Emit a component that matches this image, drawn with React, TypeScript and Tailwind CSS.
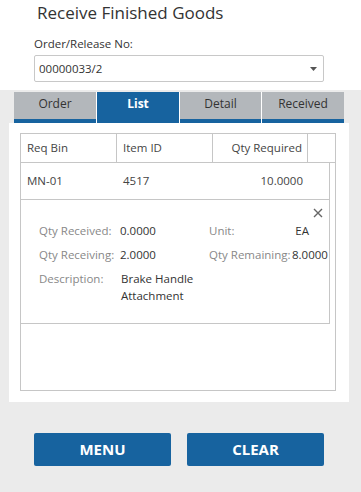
const font = { fontFamily: '"Open Sans", "Noto Sans", Arial, sans-serif' };

function Tab({ label, active }: { label: string; active?: boolean }) {
  return (
    <div
      className={`flex h-[31px] items-center justify-center border-b-4 border-[#17639f] text-[12px] ${
        active ? "bg-[#17639f] font-bold text-white" : "bg-[#b3b7bb] text-[#333]"
      }`}
    >
      <span className="-mt-[3px]">{label}</span>
    </div>
  );
}

function Field({ label, value, labelW }: { label: string; value: string; labelW: string }) {
  return (
    <div className="flex whitespace-nowrap text-[11.5px] leading-[17px]">
      <span className={`${labelW} shrink-0 text-[#888]`}>{label}</span>
      <span className="text-[#333]">{value}</span>
    </div>
  );
}

export default function App() {
  return (
    <div className="flex h-[492px] w-[361px] flex-col bg-[#ebebeb]" style={font}>
      <div className="h-[90px] bg-white">
        <div className="pl-[37px] pt-[1px] text-[17px] leading-[24px] text-[#333]">Receive Finished Goods</div>
        <div className="pl-[34px] pt-[11px] text-[11.5px] leading-[16px] text-[#333]">Order/Release No:</div>
        <div className="ml-[34px] mt-[3px] flex h-[27px] w-[290px] items-center justify-between rounded-[2px] border border-[#c8c8c8] pl-[4px] pr-[6px] text-[11.5px] text-[#333]">
          <span>00000033/2</span>
          <svg width="7" height="4" viewBox="0 0 7 4">
            <path d="M0 0h7L3.5 4z" fill="#555" />
          </svg>
        </div>
      </div>

      <div className="ml-[14px] mt-[2px] grid w-[330px] grid-cols-[82px_82px_81px_82px] gap-x-px bg-white">
        <Tab label="Order" />
        <Tab label="List" active />
        <Tab label="Detail" />
        <Tab label="Received" />
      </div>

      <div className="ml-[9px] h-[279px] w-[340px] bg-white pl-[11px] pt-[10px]">
        <div className="flex h-[258px] w-[316px] flex-col border border-[#c6c6c6] text-[11.5px] text-[#444]">
          <div className="flex h-[29px] border-b border-[#c6c6c6]">
            <div className="flex w-[96px] items-center border-r border-[#c6c6c6] pl-[6px]">Req Bin</div>
            <div className="flex w-[96px] items-center border-r border-[#c6c6c6] pl-[6px]">Item ID</div>
            <div className="flex w-[95px] items-center justify-end border-r border-[#c6c6c6] pr-[5px]">Qty Required</div>
          </div>
          <div className="flex h-[37px] w-[309px] items-center border-b border-r border-[#c6c6c6]">
            <div className="w-[96px] pl-[6px]">MN-01</div>
            <div className="w-[96px] pl-[6px]">4517</div>
            <div className="w-[90px] text-right">10.0000</div>
          </div>
          <div className="relative h-[124px] w-[309px] border-b border-r border-[#c6c6c6] pl-[18px] pt-[22px]">
            <svg className="absolute right-[6px] top-[8px]" width="10" height="10" viewBox="0 0 10 10">
              <path d="M1 1l8 8M9 1l-8 8" stroke="#666" strokeWidth="1.4" />
            </svg>
            <div className="flex flex-col gap-[7px]">
              <div className="flex">
                <div className="w-[170px]">
                  <Field label="Qty Received:" value="0.0000" labelW="w-[81px]" />
                </div>
                <div className="flex w-[100px] text-[11.5px] leading-[17px]">
                  <span className="w-[89px] text-[#888]">Unit:</span>
                  <span className="text-[#333]">EA</span>
                </div>
              </div>
              <div className="flex">
                <div className="w-[170px]">
                  <Field label="Qty Receiving:" value="2.0000" labelW="w-[81px]" />
                </div>
                <Field label="Qty Remaining:" value="8.0000" labelW="w-[83px]" />
              </div>
              <div className="flex text-[11.5px] leading-[17px]">
                <span className="w-[82px] shrink-0 text-[#888]">Description:</span>
                <span className="w-[90px] text-[#333]">Brake Handle Attachment</span>
              </div>
            </div>
          </div>
        </div>
      </div>

      <div className="mt-[31px] flex gap-[16px] pl-[34px]">
        <button className="h-[33px] w-[137px] rounded-[2px] bg-[#17639f] text-[15px] font-bold text-white">MENU</button>
        <button className="h-[33px] w-[137px] rounded-[2px] bg-[#17639f] text-[15px] font-bold text-white">CLEAR</button>
      </div>
    </div>
  );
}
